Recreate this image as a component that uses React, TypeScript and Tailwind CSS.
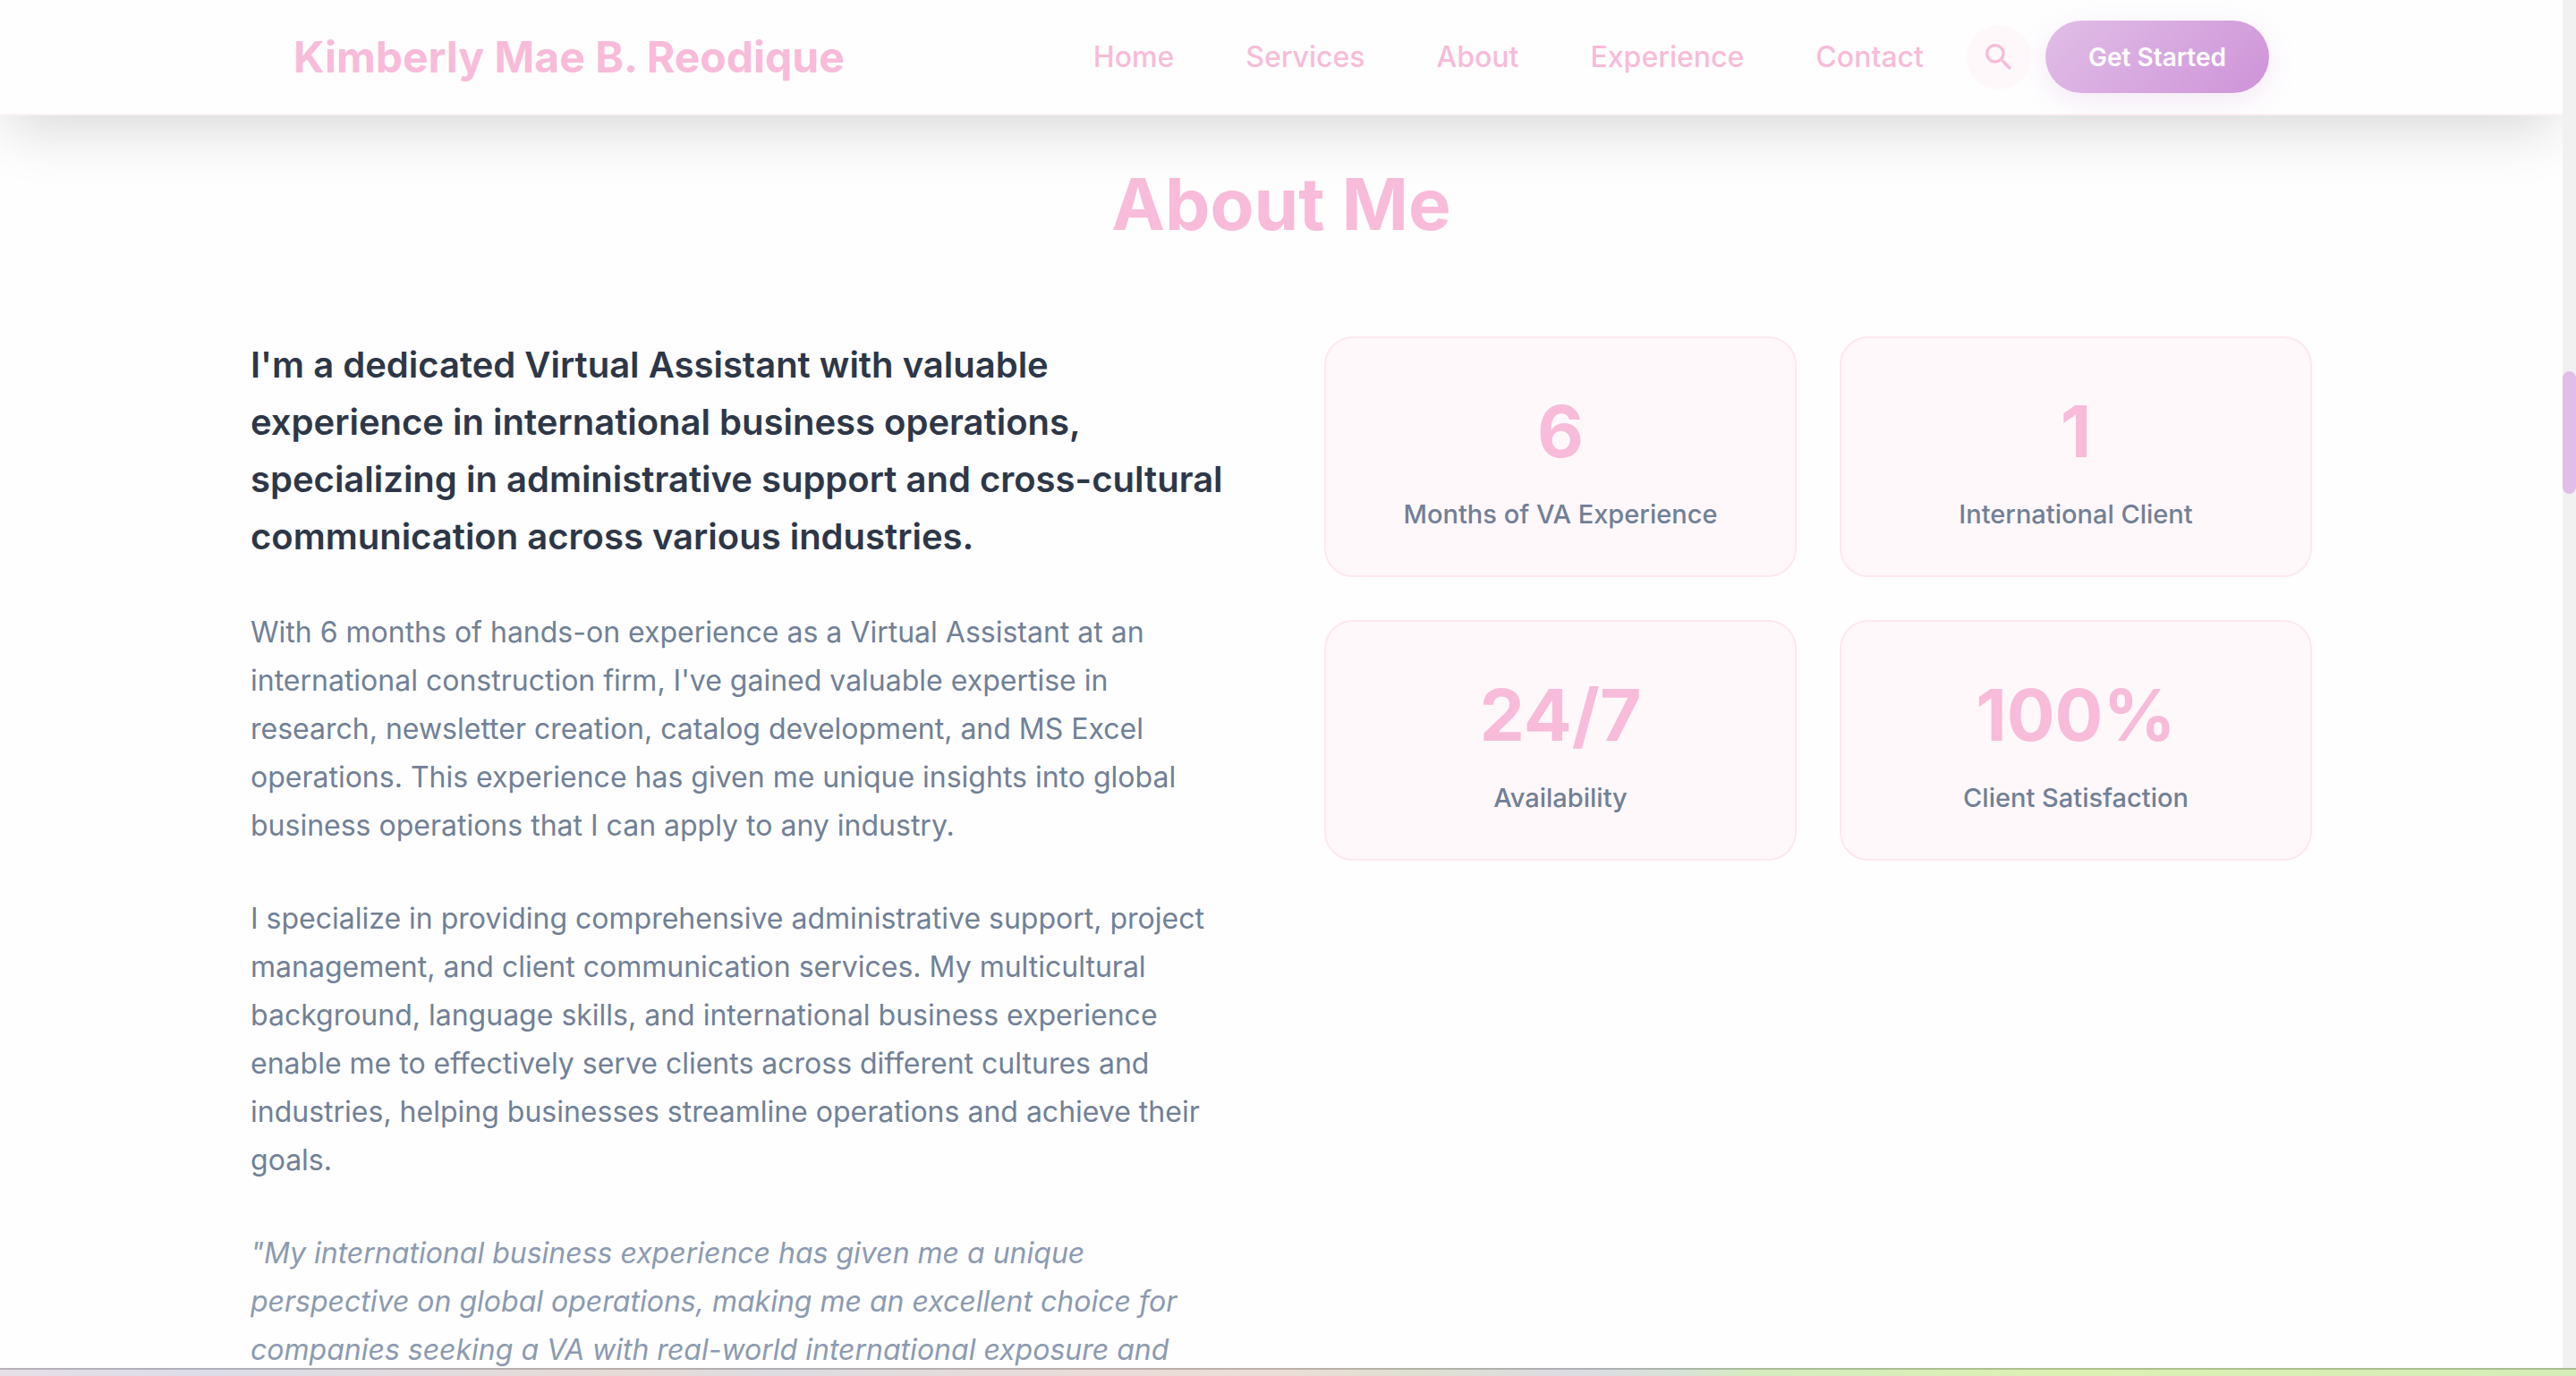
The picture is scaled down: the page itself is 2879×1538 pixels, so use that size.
import React from "react";
import { MdSearch } from "react-icons/md";

const links = ["Home", "Services", "About", "Experience", "Contact"];

const stats = [
  { value: "6", label: "Months of VA Experience" },
  { value: "1", label: "International Client" },
  { value: "24/7", label: "Availability" },
  { value: "100%", label: "Client Satisfaction" },
];

function Header() {
  return (
    <header className="relative z-10 shrink-0 border-b-2 border-[#fdf2f5] bg-[#fefefe] shadow-[0_24px_64px_-8px_rgba(0,0,0,0.15)]">
      <div className="mx-auto w-full max-w-[2400px] px-12">
        <div className="flex items-center justify-between px-12 py-[23px]">
          <a href="#home" className="text-[48px] leading-[60px] font-bold">
            Kimberly Mae B. Reodique
          </a>
          <div className="flex items-center">
            <nav aria-label="Main">
              <ul className="flex items-center gap-20">
                {links.map((link) => (
                  <li key={link}>
                    <a href={`#${link.toLowerCase()}`} className="text-[32px] leading-[50px] font-medium">
                      {link}
                    </a>
                  </li>
                ))}
              </ul>
            </nav>
            <button
              type="button"
              aria-label="Search"
              className="ml-12 flex size-[72px] items-center justify-center rounded-full bg-[#fff8fb]"
            >
              <MdSearch className="size-10" />
            </button>
            <button
              type="button"
              className="ml-4 h-[81px] rounded-full bg-linear-135 from-[#e1bee7] to-[#ce93d8] px-12 text-[28px] font-semibold text-white shadow-[0_8px_30px_rgba(206,147,216,0.2)]"
            >
              Get Started
            </button>
          </div>
        </div>
      </div>
    </header>
  );
}

function Stat({ value, label }: { value: string; label: string }) {
  return (
    <div className="rounded-[32px] border-2 border-[#fde8ef] bg-[#fff8fb] p-12 text-center">
      <p className="mb-4 text-[80px] leading-[112px] font-bold text-[#f8bbd9]">{value}</p>
      <p className="text-[29px] leading-[41px] font-medium text-[#718096]">{label}</p>
    </div>
  );
}

function About() {
  return (
    <section id="about" className="mx-auto w-full max-w-[2400px] px-12 pt-[51px]">
      <h2 className="mb-[100px] text-center text-[80px] leading-[96px] font-bold text-[#f8bbd9]">About Me</h2>
      <div className="grid grid-cols-2 items-start gap-24">
        <div className="text-[32px] leading-[54px] text-[#718096]">
          <p className="mb-12 text-[40px] leading-[64px] font-semibold text-[#2d3748]">
            I'm a dedicated Virtual Assistant with valuable experience in international business operations,
            specializing in administrative support and cross-cultural communication across various industries.
          </p>
          <p className="mb-[50px]">
            With 6 months of hands-on experience as a Virtual Assistant at an international construction firm, I've
            gained valuable expertise in research, newsletter creation, catalog development, and MS Excel operations.
            This experience has given me unique insights into global business operations that I can apply to any
            industry.
          </p>
          <p className="mb-[50px]">
            I specialize in providing comprehensive administrative support, project management, and client
            communication services. My multicultural background, language skills, and international business
            experience enable me to effectively serve clients across different cultures and industries, helping
            businesses streamline operations and achieve their goals.
          </p>
          <p className="text-[#8c9ab0] italic">
            "My international business experience has given me a unique perspective on global operations, making me
            an excellent choice for companies seeking a VA with real-world international exposure and
          </p>
        </div>
        <div className="grid grid-cols-2 gap-12">
          {stats.map((stat) => (
            <Stat key={stat.label} {...stat} />
          ))}
        </div>
      </div>
    </section>
  );
}

export default function App() {
  return (
    <div className="flex h-screen flex-col overflow-hidden bg-[#fefefe] font-['Inter',sans-serif] text-[#f8bbd9]">
      <div className="flex min-h-0 flex-1">
        <div className="flex min-w-0 flex-1 flex-col overflow-hidden">
          <Header />
          <main className="min-h-0 flex-1 overflow-hidden">
            <About />
          </main>
        </div>
        <div aria-hidden="true" className="grid w-[15px] shrink-0 grid-rows-[415fr_137fr_977fr] bg-[#f1f1f1]">
          <div className="row-start-2 rounded-full bg-[#e1bee7]" />
        </div>
      </div>
      <div
        aria-hidden="true"
        className="h-[9px] shrink-0 border-t-2 border-black/20 bg-[linear-gradient(90deg,#e6dfe8_0%,#dcdde9_8%,#e6dbd6_24%,#dddce1_30%,#eadcd8_43%,#ebded7_50%,#dfe0d0_55%,#dcdce4_61%,#d8e2d8_65%,#d5ecc0_68%,#dcf0b3_80%,#d5edb8_100%)]"
      />
    </div>
  );
}
